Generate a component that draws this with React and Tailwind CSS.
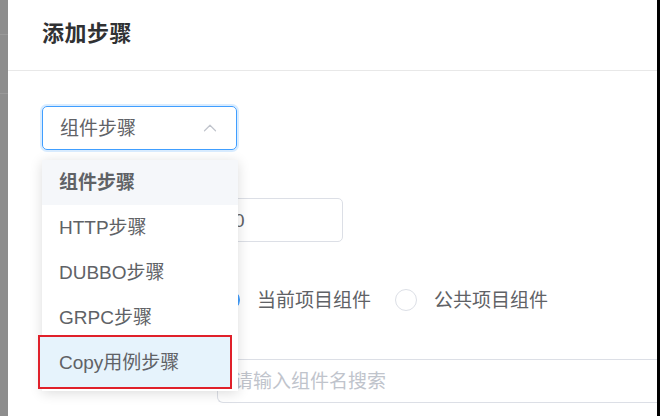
import { ChevronUp } from 'lucide-react'

const FONT = { fontFamily: '"Liberation Sans", "Noto Sans CJK SC", sans-serif' }

const OPTIONS = ['组件步骤', 'HTTP步骤', 'DUBBO步骤', 'GRPC步骤', 'Copy用例步骤']

const App = () => {
  return (
    <div className="w-[660px] h-[416px] flex overflow-hidden bg-white" style={FONT}>
      {/* mask behind the dialog */}
      <div className="w-[8px] bg-[#8d8d8d] flex flex-col">
        <div className="h-[34px]" />
        <div className="h-[60px] border-y border-[#999]" />
      </div>

      {/* dialog */}
      <div className="flex-1 flex flex-col bg-white">
        <div className="h-[71px] border-b border-[#e8e8e8] flex items-center pl-[34px] pb-[4px]">
          <h2 className="text-[22px] font-semibold text-[#303133] tracking-[0.5px]">添加步骤</h2>
        </div>

        <div className="flex-1 flex flex-col">
          {/* type select */}
          <div className="relative mt-[35px] ml-[34px] w-[195px]">
            <div className="h-[44px] rounded-[5px] border border-[#409eff] shadow-[0_0_0_2px_rgba(64,158,255,0.2)] flex items-center justify-between pl-[17px] pr-[15px]">
              <span className="text-[19px] text-[#606266] pt-[2px]">组件步骤</span>
              <ChevronUp size={22} strokeWidth={1.3} className="text-[#c0c4cc]" />
            </div>

            {/* dropdown */}
            <div className="absolute z-10 left-0 top-[54px] w-[196px] bg-white shadow-[0_2px_12px_rgba(0,0,0,0.14)] pb-[6px]">
              {OPTIONS.map((opt, idx) => (
                <div
                  key={opt}
                  className={`relative h-[45px] flex items-center pl-[17px] pt-[2px] text-[19px] text-[#606266] ${idx === 0 ? 'bg-[#f5f7fa] font-bold' : ''}`}
                >
                  {idx === OPTIONS.length - 1 ? (
                    <div className="absolute left-[-4px] top-[-5px] w-[194px] h-[54px] border-2 border-[#e0202a] bg-[#e6f3fc] flex items-center pl-[19px] pt-[2px]">
                      {opt}
                    </div>
                  ) : (
                    opt
                  )}
                </div>
              ))}
            </div>
          </div>

          {/* number input */}
          <div className="mt-[48px] ml-[209px] w-[126px] h-[44px] rounded-[5px] border border-[#dcdfe6] flex items-center pl-[16px] pt-[2px]">
            <span className="text-[19px] text-[#606266]">0</span>
          </div>

          {/* scope radios */}
          <div className="mt-[47px] ml-[210px] h-[22px] flex items-center">
            <span className="w-[22px] h-[22px] rounded-full bg-[#409eff] border border-[#409eff] flex items-center justify-center">
              <span className="w-[7px] h-[7px] rounded-full bg-white" />
            </span>
            <span className="ml-[17px] pt-[3px] text-[19px] text-[#606266]">当前项目组件</span>
            <span className="ml-[24px] w-[22px] h-[22px] rounded-full border border-[#dcdfe6] bg-white" />
            <span className="ml-[17px] pt-[3px] text-[19px] text-[#606266]">公共项目组件</span>
          </div>

          {/* search */}
          <div className="mt-[48px] ml-[209px] h-[44px] rounded-l-[6px] border border-r-0 border-[#dcdfe6] flex items-center pl-[16px] pt-[2px]">
            <span className="text-[19px] text-[#c0c4cc]">请输入组件名搜索</span>
          </div>
        </div>
      </div>

      <div className="w-[3px] bg-black" />
    </div>
  )
}

export default App
